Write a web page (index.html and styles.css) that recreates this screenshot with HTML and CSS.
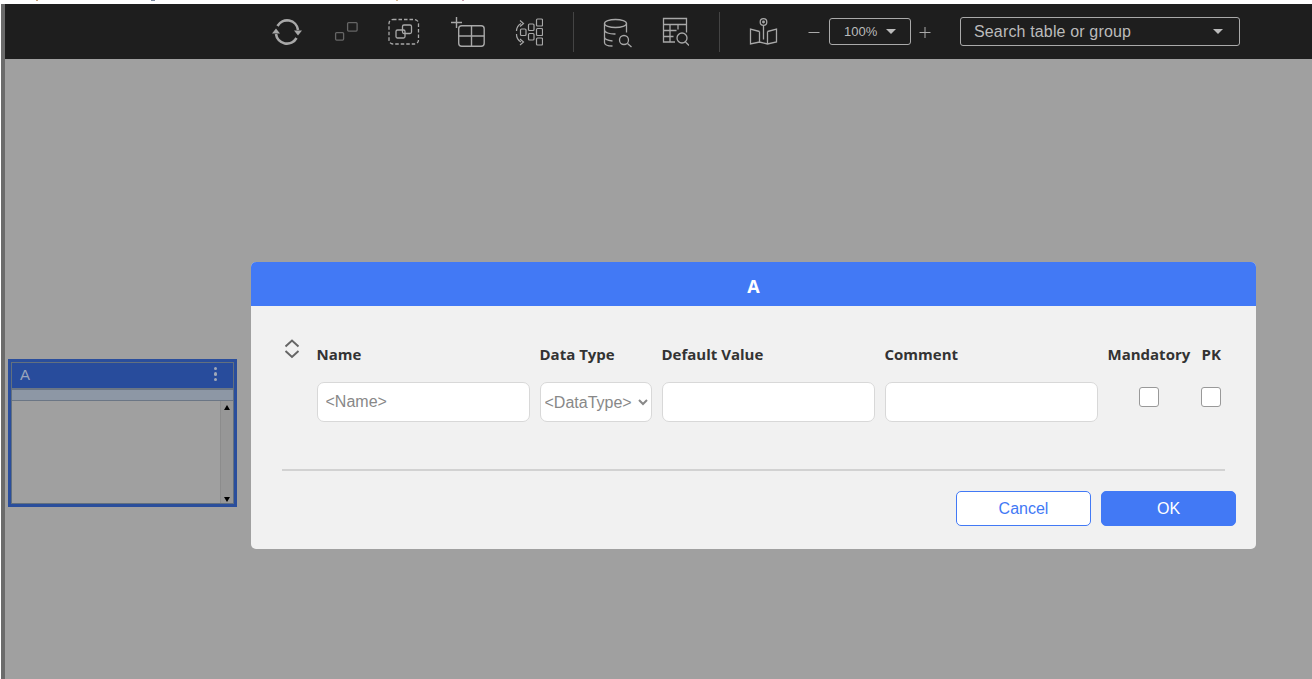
FILE: index.html
```html
<!DOCTYPE html>
<html lang="en">
<head>
    <meta charset="UTF-8">
    <title>Table editor</title>
    <link rel="stylesheet" href="styles.css">
</head>
<body>
    <div id="app">
        <div id="toolbar">
            <svg class="tool" width="32" height="32" viewBox="0 0 32 32">
                <path d="M6.500 10A11 11 0 0 1 27 14M25.500 22A11 11 0 0 1 5 18" fill="none" stroke="#a8a8a8" stroke-width="2.600"/>
                <path d="M23 14.500h8l-4 5zM1 17.500h8l-4-5z" fill="#a8a8a8"/>
            </svg>
            <svg class="tool" width="33" height="32" viewBox="0 0 33 32" fill="none" stroke="#666" stroke-width="1.300">
                <rect x="6.600" y="16.600" width="8" height="7.500" rx="1"/>
                <rect x="18.600" y="6.600" width="9.500" height="8.500" rx="1"/>
            </svg>
            <svg class="tool" width="32" height="32" viewBox="0 0 32 32" fill="none" stroke="#a8a8a8" stroke-width="1.300">
                <rect x="1" y="3.500" width="29.500" height="24.500" rx="4" stroke-dasharray="3.500 2"/>
                <rect x="8" y="14" width="9" height="8" rx="1.500"/>
                <rect x="14.500" y="9" width="9" height="8.500" rx="1.500"/>
            </svg>
            <svg class="tool" width="43" height="32" viewBox="0 0 43 32" fill="none" stroke="#a8a8a8" stroke-width="1.400">
                <path d="M5 6.500h11M10.500 1v11"/>
                <rect x="12.700" y="9.700" width="25.500" height="20.500" rx="3"/>
                <path d="M25.500 9.700v20.500M12.700 20h25.500"/>
            </svg>
            <svg class="tool" width="28" height="32" viewBox="0 0 28 32" fill="none" stroke="#a8a8a8" stroke-width="1.200">
                <path d="M6 7.500A9 9 0 0 0 1.500 15M1.500 18A9 9 0 0 0 6 26"/>
                <path d="M5 4.500l3.500 3-3.500 3M5 23l3.500 3-3.500 3"/>
                <rect x="5.500" y="13" width="5.500" height="6.500" rx="1"/>
                <rect x="13.500" y="8" width="5.500" height="6.500" rx="1"/>
                <rect x="13.500" y="17.500" width="5.500" height="6.500" rx="1"/>
                <rect x="21.500" y="3" width="6" height="7" rx="1"/>
                <rect x="21.500" y="12.500" width="6" height="7" rx="1"/>
                <rect x="21.500" y="22" width="6" height="7" rx="1"/>
            </svg>
            <div class="divider"></div>
            <svg class="tool" width="33" height="32" viewBox="0 0 33 32" fill="none" stroke="#a8a8a8" stroke-width="1.300">
                <ellipse cx="13.500" cy="7.500" rx="11" ry="4"/>
                <path d="M2.500 7.500v19c0 2 3 3.500 8 3.500M24.500 7.500v9M2.500 14c0 2.500 5 4.200 11 4M2.500 21c0 2 3.500 3.500 8 4"/>
                <circle cx="22" cy="24" r="4.500"/>
                <path d="M25.500 27.500l4 3.500"/>
            </svg>
            <svg class="tool" width="28" height="32" viewBox="0 0 28 32" fill="none" stroke="#a8a8a8" stroke-width="1.300">
                <path d="M14 26H2.500V2.500h23v14M2.500 8.500h23M2.500 14.500h13M2.500 20.500h10M9 8.500V26M17 8.500v5"/>
                <circle cx="21" cy="22" r="5"/>
                <path d="M24.500 26l3.500 3.500"/>
            </svg>
            <div class="divider"></div>
            <svg class="tool" width="30" height="32" viewBox="0 0 30 32" fill="none" stroke="#a8a8a8" stroke-width="1.300">
                <circle cx="15.500" cy="6" r="3.300"/>
                <circle cx="15.500" cy="6" r="0.800" fill="#a8a8a8"/>
                <path d="M15.500 9.500v14"/>
                <path d="M11.500 15.500l-9-2.500v15l9-2 8 2 9-2V13l-9 2.500M11.500 15.500V26M19.500 15.500V28"/>
            </svg>
            <svg class="zoom-sign zoom-minus" width="12" height="12" viewBox="0 0 12 12" stroke="#aaa">
                <path d="M0.500 6.500h11"/>
            </svg>
            <div class="zoom-select">100%<span class="caret"></span></div>
            <svg class="zoom-sign zoom-plus" width="12" height="12" viewBox="0 0 12 12" stroke="#aaa">
                <path d="M0.500 6.500h11M6 1v11"/>
            </svg>
            <div class="search-select">Search table or group<span class="caret"></span></div>
        </div>

        <div id="canvas">
            <div class="table-node">
                <div class="node-inner">
                    <div class="node-head">
                        <span>A</span>
                        <span class="kebab"><i></i><i></i><i></i></span>
                    </div>
                    <div class="node-strip"></div>
                    <div class="node-body">
                        <div class="node-scroll">
                            <span class="arrow-up"></span>
                            <span class="arrow-down"></span>
                        </div>
                    </div>
                </div>
            </div>

            <div class="modal">
                <div class="modal-title">A</div>
                <div class="modal-body">
                    <div class="field-grid">
                        <svg class="sorter" width="16" height="22" viewBox="0 0 16 22" fill="none" stroke="#666" stroke-width="2">
                            <path d="M1.500 8.500l6.500-6 6.500 6M1.500 13l6.500 6 6.500-6"/>
                        </svg>
                        <label>Name</label>
                        <label>Data Type</label>
                        <label>Default Value</label>
                        <label>Comment</label>
                        <label>Mandatory</label>
                        <label>PK</label>

                        <span></span>
                        <input type="text" placeholder="&lt;Name&gt;">
                        <select>
                            <option>&lt;DataType&gt;</option>
                        </select>
                        <input type="text">
                        <input type="text">
                        <span class="check"></span>
                        <span class="check"></span>
                    </div>
                    <hr>
                    <div class="modal-actions">
                        <button class="btn-cancel">Cancel</button>
                        <button class="btn-ok">OK</button>
                    </div>
                </div>
            </div>
        </div>
    </div>
</body>
</html>
```

FILE: styles.css
```css
html, body {
    margin: 0;
    height: 100%;
    overflow: hidden;
    background: white;
    font-family: "Liberation Sans", Arial, sans-serif;
}
#app {
    height: 100%;
    padding: 4px 0 0 1px;
    box-sizing: border-box;
    display: flex;
    flex-direction: column;
    /* bottoms of the clipped text above the toolbar */
    background:
        linear-gradient(#c9a27a, #c9a27a) 36px 0 / 2px 1px no-repeat,
        linear-gradient(#7a88a0, #7a88a0) 151px 0 / 4px 1px no-repeat,
        linear-gradient(#d8b890, #d8b890) 396px 0 / 2px 1px no-repeat,
        linear-gradient(#c8a0b0, #c8a0b0) 462px 0 / 2px 1px no-repeat;
}
#toolbar {
    height: 55px;
    flex: none;
    display: flex;
    align-items: center;
    gap: 26px;
    padding-left: 266px;
    background: #1e1e1e;
    border-left: 4px solid #6b6b6b;
    color: #bbb;
}
.tool, .zoom-sign {
    flex: none;
}
.divider {
    width: 1px;
    height: 40px;
    background: #444;
    margin: 0 2px 0 4px;
}
.zoom-minus {
    margin: 0 -17px 0 4px;
}
.zoom-plus {
    margin: 0 3px 0 -18px;
}
.zoom-select, .search-select {
    display: flex;
    align-items: center;
    justify-content: space-between;
    box-sizing: border-box;
    border: 1px solid #aaa;
    border-radius: 3px;
}
.zoom-select {
    width: 82px;
    height: 27px;
    padding: 0 14px;
    font-size: 13px;
}
.search-select {
    width: 280px;
    height: 29px;
    padding: 0 16px 0 13px;
    font-size: 16px;
    letter-spacing: 0.15px;
}
.caret {
    width: 0;
    height: 0;
    border: 5px solid transparent;
    border-top-color: #bbb;
    border-bottom: 0;
}
#canvas {
    flex: 1;
    position: relative;
    background: #a0a0a0;
    border-left: 4px solid #6b6b6b;
}
.table-node {
    position: absolute;
    left: 3px;
    top: 300px;
    width: 229px;
    height: 148px;
    box-sizing: border-box;
    border: 3px solid #2a4e9c;
}
.node-inner {
    height: 100%;
    box-sizing: border-box;
    border: 1px solid #62707f;
    display: flex;
    flex-direction: column;
}
.node-head {
    height: 25px;
    flex: none;
    box-sizing: border-box;
    display: flex;
    align-items: center;
    justify-content: space-between;
    padding: 0 16px 3px 8px;
    background: #284c9c;
    color: #9aa5bb;
    font-size: 15px;
}
.kebab {
    display: flex;
    flex-direction: column;
    gap: 2px;
}
.kebab i {
    width: 3.500px;
    height: 3.500px;
    border-radius: 50%;
    background: #a0a8b8;
}
.node-strip {
    height: 10px;
    flex: none;
    background: #8d97a5;
    border-top: 2px solid #6b7685;
    border-bottom: 1px solid #6b7685;
}
.node-body {
    flex: 1;
    display: flex;
    justify-content: flex-end;
}
.node-scroll {
    width: 12px;
    background: #979797;
    border-left: 1px solid #8c8c8c;
    display: flex;
    flex-direction: column;
    justify-content: space-between;
    align-items: center;
    padding: 4px 0 1px;
}
.arrow-up, .arrow-down {
    width: 0;
    height: 0;
    border: 3px solid transparent;
}
.arrow-up {
    border-bottom: 5px solid black;
    border-top: 0;
}
.arrow-down {
    border-top: 5px solid black;
    border-bottom: 0;
}
.modal {
    position: absolute;
    left: 246px;
    top: 203px;
    width: 1005px;
    height: 287px;
    border-radius: 5px;
    overflow: hidden;
    background: #f1f1f1;
}
.modal-title {
    height: 44px;
    line-height: 48px;
    background: #4279f5;
    color: white;
    text-align: center;
    font-family: "Open Sans", sans-serif;
    font-size: 18px;
    font-weight: 700;
}
.modal-body {
    padding: 35px 20px 0 31px;
}
.field-grid {
    display: grid;
    grid-template-columns: 24.500px 213px 112px 213px 213px 84px 20px;
    column-gap: 10px;
    row-gap: 15px;
    align-items: center;
    margin-right: 11px;
}
.field-grid label {
    font-family: "Open Sans", sans-serif;
    font-size: 15px;
    font-weight: 700;
    line-height: 26px;
    color: #333;
    white-space: nowrap;
}
.sorter {
    margin-left: 2px;
    margin-top: -10px;
}
.field-grid input, .field-grid select {
    height: 40px;
    width: 100%;
    box-sizing: border-box;
    border: 1px solid #d8d8d8;
    border-radius: 7px;
    background: white;
    font-family: "Liberation Sans", Arial, sans-serif;
    font-size: 16px;
    padding: 0 8px;
    color: #888;
}
.field-grid select {
    padding: 0;
}
.field-grid input::placeholder {
    color: #888;
}
.check {
    width: 20px;
    height: 20px;
    box-sizing: border-box;
    justify-self: center;
    margin: 0 2px 10px 0;
    border: 1.500px solid #999;
    border-radius: 3px;
    background: white;
}
hr {
    height: 2px;
    margin: 47px 11px 0 0;
    border: 0;
    background: #d2d2d2;
}
.modal-actions {
    display: flex;
    justify-content: flex-end;
    gap: 10px;
    margin-top: 20px;
}
.modal-actions button {
    width: 135px;
    height: 35px;
    border-radius: 5px;
    font-family: "Liberation Sans", Arial, sans-serif;
    font-size: 16px;
}
.btn-cancel {
    background: white;
    border: 1px solid #4279f5;
    color: #4279f5;
}
.btn-ok {
    background: #4279f5;
    border: 1px solid #4279f5;
    color: white;
}
```
